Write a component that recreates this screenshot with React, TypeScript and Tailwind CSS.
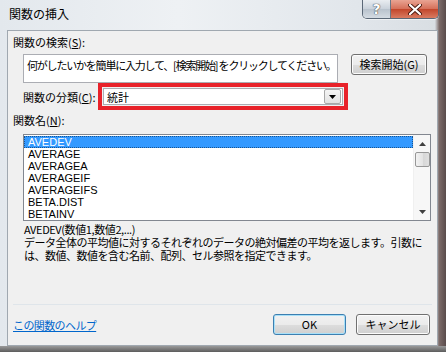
import React from "react";

const jp = "font-['Noto_Sans_CJK_JP','Noto_Sans',sans-serif]";
const lat = "font-['Liberation_Sans','Noto_Sans_CJK_JP',sans-serif]";

const items = ["AVEDEV", "AVERAGE", "AVERAGEA", "AVERAGEIF", "AVERAGEIFS", "BETA.DIST", "BETAINV"];

const TitleButtons = () => (
  <div className="flex h-[19px] mr-[7px] rounded-b-[5px] overflow-hidden border border-t-0 border-[#5b6877] shadow-[0_1px_0_#ffffff80]">
    <div className="w-[28px] flex items-center justify-center bg-[linear-gradient(#e9edf1,#c9d1da_50%,#b8c2cc_51%,#d4dbe2)] border-r border-[#6b7785]">
      <span className="font-['DejaVu_Sans',sans-serif] font-bold text-[14px] leading-none text-white [text-shadow:0_0_1px_#333,0_0_1px_#333]">?</span>
    </div>
    <div className="w-[47px] flex items-center justify-center bg-[linear-gradient(#e9a493,#d56f58_50%,#c2462b_51%,#d97b61)]">
      <svg width="14" height="11" viewBox="0 0 14 11">
        <path d="M2 1 L12 10 M12 1 L2 10" stroke="#4a1a10" strokeWidth="4" strokeLinecap="round" />
        <path d="M2 1 L12 10 M12 1 L2 10" stroke="#ffffff" strokeWidth="2.2" strokeLinecap="round" />
      </svg>
    </div>
  </div>
);

const Button = ({ label, primary }: { label: string; primary?: boolean }) => (
  <div
    className={`h-[21px] flex items-center justify-center rounded-[3px] border ${
      primary ? "border-[#3c7fb1] shadow-[inset_0_0_0_1px_#a8e0f8]" : "border-[#707070] shadow-[inset_0_0_0_1px_#fcfcfc]"
    } bg-[linear-gradient(#f2f2f2,#ebebeb_50%,#dddddd_51%,#cfcfcf)] text-[11px] text-black ${jp}`}
  >
    {label}
  </div>
);

export default function App() {
  return (
    <div className="w-[446px] h-[352px] flex flex-col bg-[linear-gradient(to_right,#e3e8ed_0%,#eef1f4_40%,#e1e6eb_80%,#d9dee3_97.5%,#7b6a68_98.5%,#5a4c4c_100%)] overflow-hidden">
      <div className="h-[30px] flex items-start justify-between shrink-0">
        <div className={`pl-[9px] pt-[6px] text-[12px] leading-[16px] text-black ${jp}`}>関数の挿入</div>
        <TitleButtons />
      </div>

      <div className={`ml-[7px] w-[431px] h-[316px] shrink-0 flex flex-col bg-[#f0f0f0] border border-[#a0a8b0] text-[11px] text-black ${jp}`}>
        <div className="mt-[4px] ml-[5px] h-[14px] leading-[14px]">
          関数の検索(<span className="underline">S</span>):
        </div>

        <div className="mt-[5px] ml-[15px] flex items-start">
          <div className="w-[315px] h-[29px] bg-white border border-[#abadb3] pl-[3px] pt-[3px] leading-[14px] tracking-[-1.2px] whitespace-nowrap overflow-hidden">
            何がしたいかを簡単に入力して、[検索開始] をクリックしてください。
          </div>
          <div className="ml-[13px] w-[76px]">
            <Button label="検索開始(G)" />
          </div>
        </div>

        <div className="ml-[15px] flex items-center h-[27px]">
          <div className="w-[75px] leading-[14px] whitespace-nowrap">
            関数の分類(<span className="underline">C</span>):
          </div>
          <div className="w-[250px] h-[27px] border-[4px] border-[#e8222a] p-px">
            <div className="h-full bg-white border border-[#abadb3] flex items-center justify-between">
              <span className="pl-[3px] leading-[14px]">統計</span>
              <div className="w-[17px] h-[15px] mr-px border border-[#a8a8a8] rounded-[2px] bg-[linear-gradient(#f4f4f4,#e2e2e2)] flex items-center justify-center">
                <svg width="7" height="4" viewBox="0 0 7 4">
                  <path d="M0 0 H7 L3.5 4 Z" fill="#000" />
                </svg>
              </div>
            </div>
          </div>
        </div>

        <div className="mt-[3px] ml-[5px] h-[14px] leading-[14px]">
          関数名(<span className="underline">N</span>):
        </div>

        <div className="mt-[7px] ml-[15px] w-[408px] h-[87px] bg-white border border-[#828790] flex">
          <div className={`flex-1 pt-px ${lat}`}>
            {items.map((it, i) => (
              <div
                key={it}
                className={`h-[12px] leading-[12px] pl-[4px] text-[11px] ${
                  i === 0 ? "bg-[#3399ff] text-white outline outline-1 outline-dotted outline-[#1a5590] -outline-offset-1" : "text-black"
                }`}
              >
                {it}
              </div>
            ))}
          </div>
          <div className="w-[17px] flex flex-col items-center bg-[#f7f7f7] border-l border-[#f0f0f0]">
            <div className="h-[17px] flex items-center justify-center">
              <svg width="7" height="4" viewBox="0 0 7 4">
                <path d="M0 4 H7 L3.5 0 Z" fill="#404040" />
              </svg>
            </div>
            <div className="w-[15px] h-[15px] rounded-[2px] border border-[#979797] bg-[linear-gradient(to_right,#f2f2f2,#e4e4e4_50%,#d6d6d6_51%,#e0e0e0)]" />
            <div className="flex-1" />
            <div className="h-[17px] flex items-center justify-center">
              <svg width="7" height="4" viewBox="0 0 7 4">
                <path d="M0 0 H7 L3.5 4 Z" fill="#404040" />
              </svg>
            </div>
          </div>
        </div>

        <div className="mt-[2px] ml-[16px] h-[13px] leading-[13px] tracking-[-0.4px]">AVEDEV(数値1,数値2,...)</div>
        <div className="ml-[16px] leading-[13px] tracking-[-0.5px] whitespace-nowrap">
          <div>データ全体の平均値に対するそれぞれのデータの絶対偏差の平均を返します。引数に</div>
          <div>は、数値、数値を含む名前、配列、セル参照を指定できます。</div>
        </div>

        <div className="flex-1" />

        <div className="mx-[5px] h-px bg-[#dfe5ea]" />
        <div className="mt-[9px] mb-[10px] ml-[5px] mr-[7px] flex items-center h-[21px]">
          <a className="text-[#0066cc] underline leading-[14px] tracking-[-0.6px]">この関数のヘルプ</a>
          <div className="flex-1" />
          <div className="w-[73px]">
            <Button label="OK" primary />
          </div>
          <div className="ml-[10px] w-[74px]">
            <Button label="キャンセル" />
          </div>
        </div>
      </div>

      <div className="flex-1 bg-[linear-gradient(#9a9a9a,#5c5c5c)]" />
    </div>
  );
}
